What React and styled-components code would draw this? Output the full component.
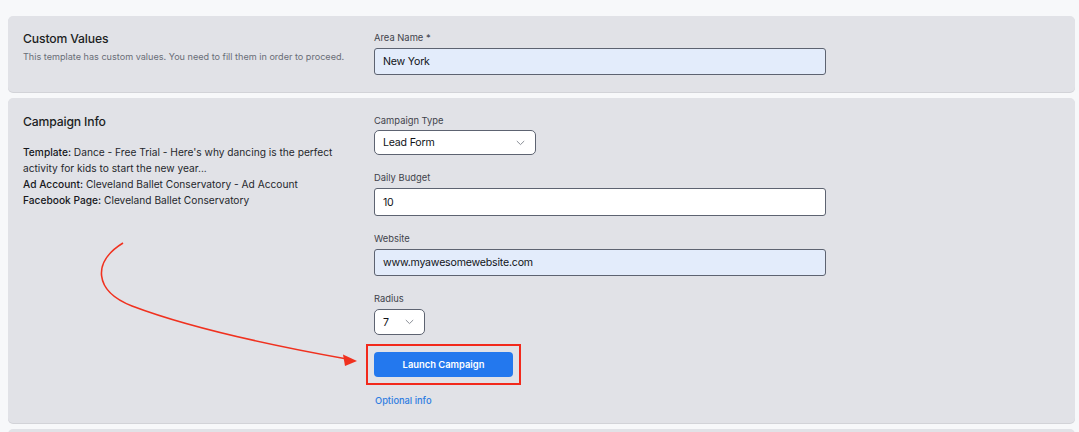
import React from "react";
import styled, { createGlobalStyle } from "styled-components";

const Global = createGlobalStyle`
  html, body { margin: 0; padding: 0; background: #f7f8fa; }
  body { font-family: Inter, "Noto Sans", "Liberation Sans", sans-serif; color: #1f2126; }
  * { box-sizing: border-box; }
`;

const Page = styled.div`
  position: relative;
  padding: 16px 4px 0 8px;
  display: flex;
  flex-direction: column;
  gap: 6px;
  height: 432px;
  overflow: hidden;
`;

const Card = styled.section`
  background: #e1e2e7;
  border-radius: 5px;
  box-shadow: 0 1px 0 #d2d3d8;
  padding: ${(p) => p.$pad || "15px 15px 17px"};
  display: grid;
  grid-template-columns: 351px 452px;
  min-height: ${(p) => p.$minH || "auto"};
`;

const Left = styled.div`
  display: flex;
  flex-direction: column;
`;

const Title = styled.h2`
  margin: 0;
  font-size: 12.2px;
  line-height: 16px;
  font-weight: 500;
  letter-spacing: -0.15px;
  color: #1c1e23;
`;

const Subtitle = styled.p`
  margin: 3px 0 0;
  font-size: 9.1px;
  line-height: 14px;
  color: #6a6e77;
`;

const Info = styled.div`
  margin-top: 14px;
  font-size: 10.2px;
  line-height: 16px;
  color: #25272c;
  width: 320px;
`;

const Key = styled.span`
  font-weight: 500;
  color: #16181c;
`;

const Right = styled.div`
  display: flex;
  flex-direction: column;
  align-items: flex-start;
`;

const Field = styled.div`
  display: flex;
  flex-direction: column;
  align-items: flex-start;
  width: 100%;
  margin-top: ${(p) => (p.$first ? "0" : "16px")};
`;

const Label = styled.label`
  font-size: 9.4px;
  line-height: 14px;
  color: #3f434b;
  margin-bottom: ${(p) => p.$gap || "3px"};
`;

const Input = styled.div`
  width: 452px;
  height: ${(p) => p.$h || "27px"};
  border: 1px solid #5d6371;
  border-radius: 3px;
  background: ${(p) => (p.$filled ? "#e3ecfb" : "#ffffff")};
  padding: 0 8px;
  display: flex;
  align-items: center;
  font-size: 10.6px;
  letter-spacing: -0.2px;
  color: #111318;
`;

const Select = styled.div`
  width: ${(p) => p.$w};
  height: ${(p) => p.$h || "25px"};
  border: 1px solid #5d6371;
  border-radius: 5px;
  background: #ffffff;
  padding: 0 10px 0 8px;
  display: flex;
  align-items: center;
  justify-content: space-between;
  font-size: 10.6px;
  letter-spacing: -0.2px;
  color: #111318;
`;

const Chevron = () => (
  <svg width="9" height="6" viewBox="0 0 9 6">
    <path d="M0.8 1 L4.5 4.6 L8.2 1" fill="none" stroke="#8a8e96" strokeWidth="1" />
  </svg>
);

const Button = styled.button`
  position: relative;
  margin-top: 17px;
  width: 139px;
  height: 25px;
  border: none;
  border-radius: 4px;
  background: #2378ee;
  color: #fff;
  font-family: inherit;
  font-size: 9.4px;
  font-weight: 600;
  cursor: pointer;

  &::after {
    content: "";
    position: absolute;
    inset: -8px;
    border: 2px solid #f2291c;
  }
`;

const Link = styled.a`
  margin-top: 17px;
  margin-left: 1px;
  font-size: 9.3px;
  line-height: 14px;
  font-weight: 500;
  color: #2f7de1;
  text-decoration: none;
`;

const Arrow = styled.svg`
  position: absolute;
  left: 0;
  top: 0;
  pointer-events: none;
`;

export default function App() {
  return (
    <>
      <Global />
      <Page>
        <Card>
          <Left>
            <Title>Custom Values</Title>
            <Subtitle>This template has custom values. You need to fill them in order to proceed.</Subtitle>
          </Left>
          <Right>
            <Field $first>
              <Label>Area Name *</Label>
              <Input $filled>New York</Input>
            </Field>
          </Right>
        </Card>
        <Card $pad="16px 15px 15px">
          <Left>
            <Title>Campaign Info</Title>
            <Info>
              <Key>Template:</Key> Dance - Free Trial - Here's why dancing is the perfect activity for kids to start the new year...
              <br />
              <Key>Ad Account:</Key> Cleveland Ballet Conservatory - Ad Account
              <br />
              <Key>Facebook Page:</Key> Cleveland Ballet Conservatory
            </Info>
          </Left>
          <Right>
            <Field $first>
              <Label $gap="2px">Campaign Type</Label>
              <Select $w="162px">
                <span>Lead Form</span>
                <Chevron />
              </Select>
            </Field>
            <Field>
              <Label>Daily Budget</Label>
              <Input $h="28px">10</Input>
            </Field>
            <Field>
              <Label>Website</Label>
              <Input $filled>www.myawesomewebsite.com</Input>
            </Field>
            <Field>
              <Label>Radius</Label>
              <Select $w="51px" $h="26px">
                <span>7</span>
                <Chevron />
              </Select>
            </Field>
            <Button>Launch Campaign</Button>
            <Link href="#">Optional info</Link>
          </Right>
        </Card>
        <Card $minH="40px" />
        <Arrow width="1079" height="432" viewBox="0 0 1079 432">
          <path
            d="M123 243 C 92 262, 94 291, 132 306 C 190 328, 280 347, 347 359"
            fill="none"
            stroke="#f0311f"
            strokeWidth="1.6"
          />
          <polygon points="357,361 343,354.5 345,366" fill="#f0311f" />
        </Arrow>
      </Page>
    </>
  );
}
